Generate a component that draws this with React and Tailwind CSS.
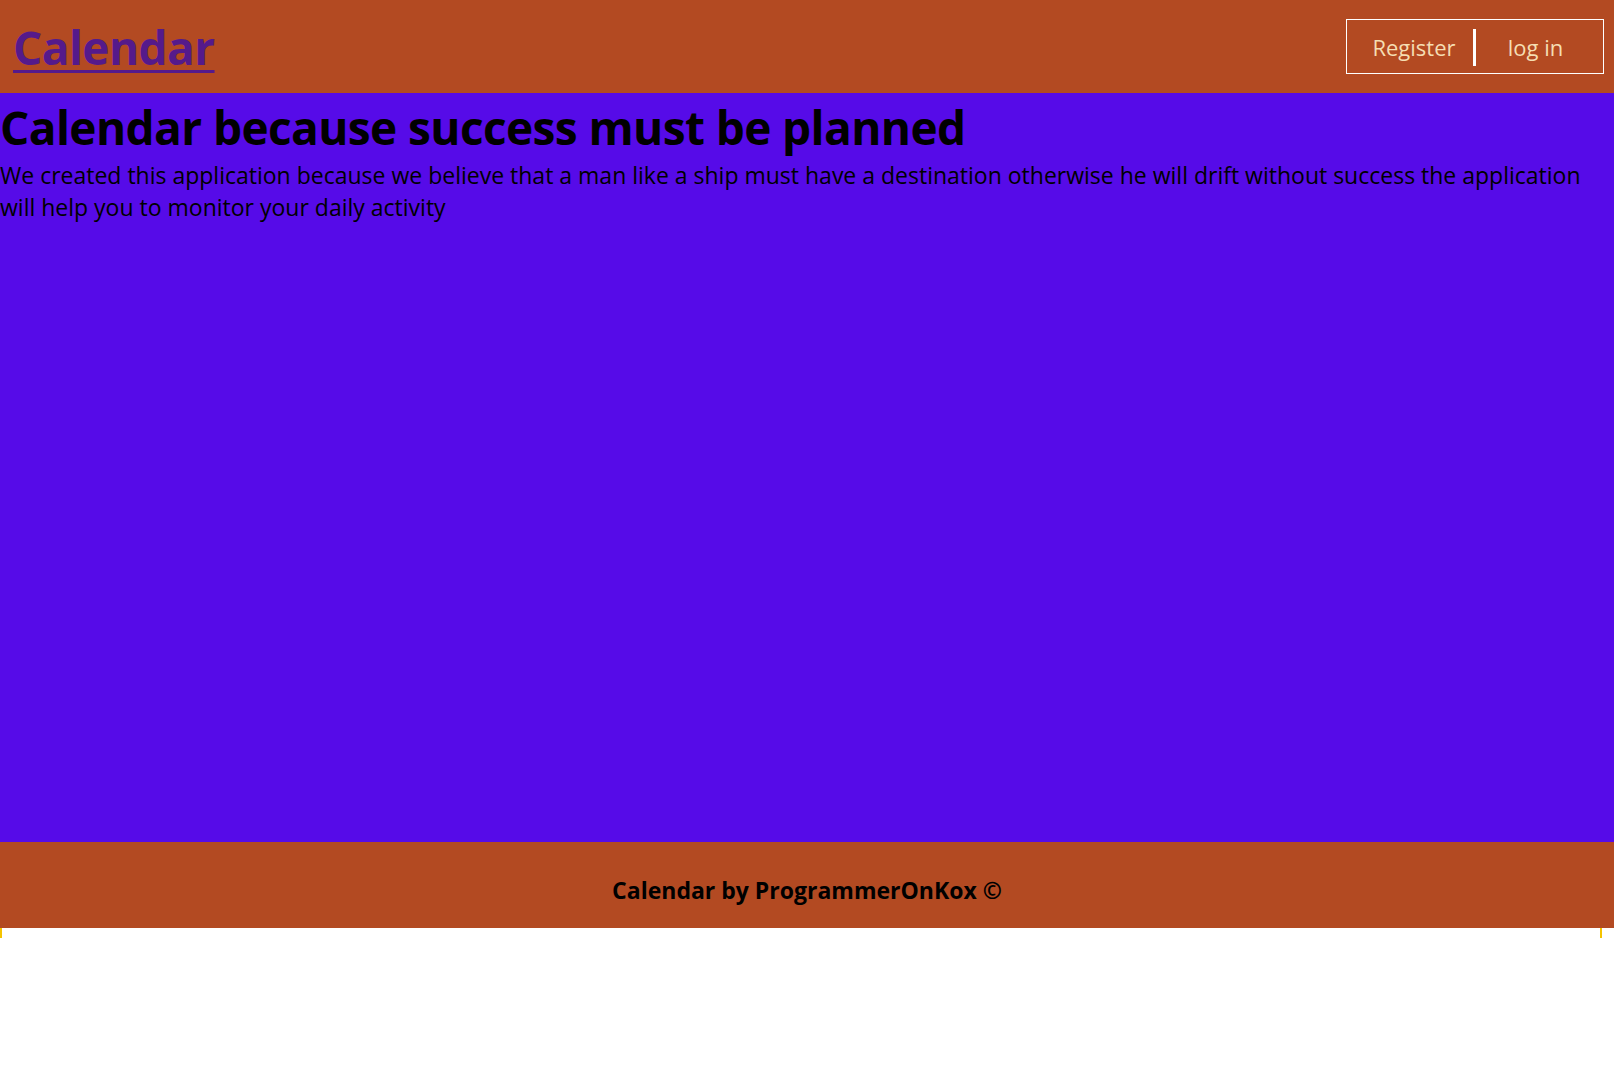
import React from 'react';

const App = () => {
  return (
    <div className="min-h-[1085px] bg-white" style={{ fontFamily: '"Open Sans", "Noto Sans", sans-serif' }}>
      <header className="h-[93px] bg-[#b34a22] flex items-center justify-between pl-[13px] pr-[10px]">
        <a href="#" className="text-[46px] font-bold text-[#551a8b] underline decoration-[3px] underline-offset-[5px] tracking-[-0.6px] leading-none">
          Calendar
        </a>
        <nav className="w-[258px] h-[55px] border border-white flex items-center text-[#f5deb3] text-[22px] pt-[2px]">
          <a href="#" className="w-[126px] pl-[8px] text-center">Register</a>
          <span className="w-[3px] h-[37px] bg-white" />
          <a href="#" className="flex-1 pr-[8px] text-center">log in</a>
        </nav>
      </header>
      <main className="h-[749px] bg-[#560be8] text-black">
        <h1 className="text-[46px] font-bold leading-[64px] tracking-[-0.6px] pt-[2px]">
          Calendar because success must be planned
        </h1>
        <p className="text-[23px] leading-[32px] pr-[16px]">
          We created this application because we believe that a man like a ship must have a destination otherwise he will drift without success the application will help you to monitor your daily activity
        </p>
      </main>
      <footer className="h-[86px] bg-[#b34a22] flex items-center justify-center pt-[10px]">
        <p className="text-[23px] font-bold text-black">Calendar by ProgrammerOnKox ©</p>
      </footer>
      <div className="w-[1602px] h-[10px] border-x-2 border-[#f5c400]" />
    </div>
  );
};

export default App;
